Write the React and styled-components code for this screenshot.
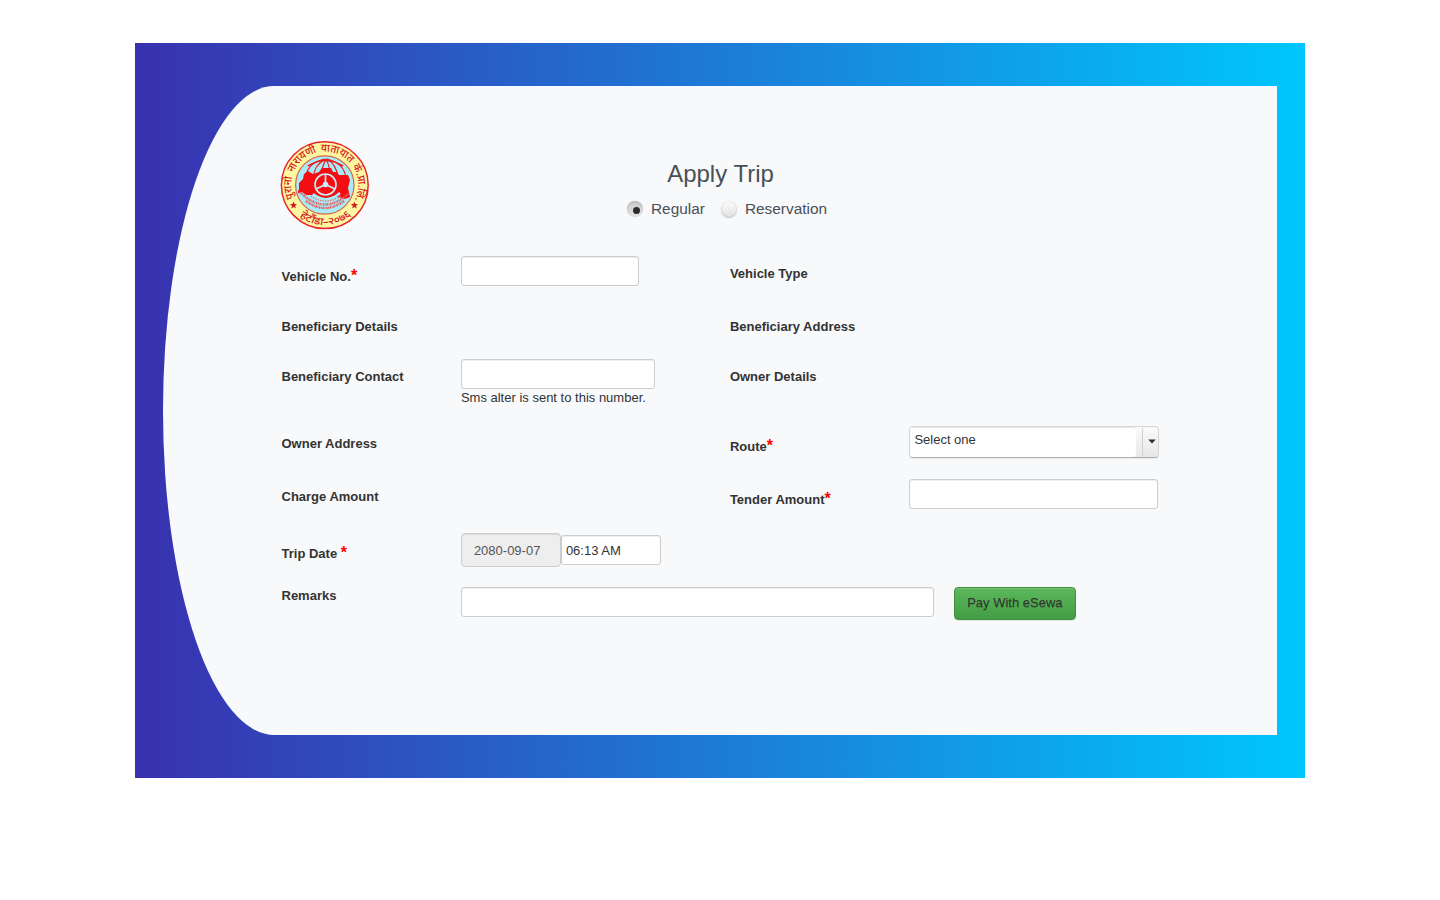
import React from "react";
import styled, { createGlobalStyle, css } from "styled-components";

const GlobalStyle = createGlobalStyle`
  *, *::before, *::after { box-sizing: border-box; }
  body {
    margin: 0;
    background: #fff;
    color: #333;
    font: 13px/20px "Liberation Sans", Arial, sans-serif;
  }
`;

const Page = styled.main`
  width: 1170px;
  height: 735px;
  margin: 43px auto 0;
  padding: 43px 28px 43px 28px;
  background: linear-gradient(to right, #3931af, #00c6ff);
`;

const Card = styled.section`
  height: 649px;
  padding: 55px 110px 0 118.5px;
  background: #f8f9fb;
  border-top-left-radius: 10% 50%;
  border-bottom-left-radius: 10% 50%;
`;

const Header = styled.header`
  display: grid;
  grid-template-columns: 90px 1fr 90px;
  height: 115px;
  margin-left: -2px;
`;

const Emblem = styled.svg`
  display: block;
  width: 90px;
  height: 90px;
`;

const Heading = styled.div`
  display: flex;
  flex-direction: column;
  align-items: center;
  padding: 19px 6.5px 0 0;
  color: #495057;
`;

const Title = styled.h3`
  margin: 0;
  padding-left: 1px;
  font-size: 24px;
  line-height: 28px;
  font-weight: 400;
`;

const Choices = styled.div`
  display: flex;
  gap: 16px;
  margin-top: 11px;
  padding-left: 14px;
`;

const Choice = styled.label`
  display: flex;
  align-items: center;
  gap: 8px;
  font-size: 15.4px;
  line-height: 20px;
`;

const Radio = styled.span`
  display: flex;
  width: 16px;
  height: 16px;
  border-radius: 50%;
  background: ${(p) => (p.$on ? "linear-gradient(#c9c9c9, #e4e4e4)" : "linear-gradient(#fdfdfd, #e2e2e2)")};
  box-shadow: ${(p) =>
    p.$on
      ? "inset 0 1px 2px rgba(0,0,0,.12), 0 0 0 .5px rgba(0,0,0,.08)"
      : "inset 0 0 0 1px rgba(0,0,0,.07), 0 1px 1px rgba(0,0,0,.22)"};

  &::after {
    content: "";
    display: ${(p) => (p.$on ? "block" : "none")};
    width: 7px;
    height: 7px;
    margin: 6px 0 0 6px;
    border-radius: 50%;
    background: #2b2b2b;
  }
`;

const Row = styled.div`
  display: grid;
  grid-template-columns: 179.4px 269px 179.2px 1fr;
  align-items: start;
  height: ${(p) => p.$height}px;
`;

const RemarksRow = styled.div`
  display: grid;
  grid-template-columns: 179.4px 473px auto;
  align-items: start;
  justify-content: start;
`;

const LabelText = styled.label`
  padding-top: ${(p) => (p.$flush ? 1 : p.$required ? 11 : 8)}px;
  font-weight: 700;
  white-space: pre;
`;

const Star = styled.span`
  color: #f00;
  font-size: 16px;
  line-height: 1;
`;

const control = css`
  display: block;
  height: 30px;
  padding: 4px;
  border: 1px solid #ccc;
  border-radius: 3px;
  background: #fff;
  box-shadow: inset 0 1px 1px rgba(0, 0, 0, 0.075);
  color: #333;
  font: inherit;
  outline: none;
`;

const TextInput = styled.input`
  ${control}
  width: ${(p) => p.$width}px;
  margin-top: ${(p) => p.$offset || 0}px;
`;

const DateInput = styled.input`
  ${control}
  width: 100px;
  height: 34px;
  padding: 6px 12px;
  border-radius: 4px;
  background: #eee;
  color: #555;
`;

const DateTime = styled.div`
  display: flex;
`;

const Hint = styled.div`
  line-height: 18px;
`;

const Combo = styled.div`
  display: flex;
  width: 250px;
  height: 32px;
  border: 1px solid #d6d6d6;
  border-bottom-color: #ababab;
  border-radius: 4px;
  background: linear-gradient(#fafafa, #e8e8e8);
  box-shadow: 0 1px 1px rgba(0, 0, 0, 0.06);
  overflow: hidden;
`;

const ComboValue = styled.div`
  width: 226px;
  padding: 3px 4.3px;
  border-radius: 0 3px 3px 0;
  background: #fff;
  box-shadow: inset 0 1px 1px rgba(0, 0, 0, 0.1);
`;

const ComboArrow = styled.div`
  display: flex;
  align-items: center;
  justify-content: center;
  width: 16px;
  margin-left: auto;
  border-left: 1px solid #d0d0d0;
  border-radius: 4px;
  background: linear-gradient(#fbfbfb, #e6e6e6);

  svg { display: block; margin: 0 0 1px 2px; }
`;

const PayButton = styled.button`
  height: 33px;
  width: 122px;
  margin: 2px 0 0 20px;
  padding: 0 0 2px;
  border: 1px solid #3e8f3e;
  border-radius: 4px;
  background: linear-gradient(#5cb85c, #449d44);
  box-shadow: inset 0 1px 0 rgba(255, 255, 255, 0.15), 0 1px 1px rgba(0, 0, 0, 0.075);
  color: #333;
  font: inherit;
  text-shadow: 0 1px 0 rgba(0, 0, 0, 0.2);
`;

const Label = ({ children, required, flush }) => (
  <LabelText $required={required} $flush={flush}>
    {children}
    {required && <Star>*</Star>}
  </LabelText>
);

const Logo = () => (
  <Emblem viewBox="0 0 90 90" role="img">
    <defs>
      <path id="upperArc" d="M 14.4 58 A 33.4 33.4 0 1 1 70.4 65.4" />
      <path id="lowerArc" d="M 13 68.7 A 40.5 40.5 0 0 0 76.6 68.7" />
      <clipPath id="disc"><circle cx="45" cy="44" r="28" /></clipPath>
    </defs>
    <circle cx="44.8" cy="44.2" r="43.4" fill="#fdf6a3" stroke="#e8242a" strokeWidth="1.5" />
    <circle cx="44.8" cy="44" r="29.2" fill="#a8ebf7" stroke="#d9674c" strokeWidth="1.2" />
    <g clipPath="url(#disc)">
      <g fill="none" stroke="#f01318" strokeWidth="1.1">
        <path d="M45 18 C34 20 27 27 25 37" />
        <path d="M46 18 C39 21 34 28 33 37" />
        <path d="M46 18 C44 22 41 28 41 36" />
        <path d="M46 18 C49 23 50 29 50 36" />
        <path d="M47 18 C54 22 57 29 58 36" />
        <path d="M47 18 C60 21 65 29 66 37" />
        <path d="M28 25 Q45 14 63 25" strokeWidth="1.5" />
      </g>
      <path d="M17 53 L19 48 L19 42 L23 38 L24 33 L28 30 L33 33 L39 31 L42 27 L51 27 L53 31 L57 31 L59 34 L68 34 L70 39 L68 47 L70 56 L65 58 L54 55 L45 58 L36 54 L26 54 L22 51 Z" fill="#f40d12" />
      <path d="M33 53 Q46 64 60 52" fill="none" stroke="#a8ebf7" strokeWidth="2.5" />
      <circle cx="45.5" cy="43.5" r="10.5" fill="#f40d12" stroke="#c8eef0" strokeWidth="1.7" />
      <g stroke="#c8eef0" strokeWidth="1.7">
        <path d="M45.5 43.5 L45.5 33 M45.5 43.5 L36 48 M45.5 43.5 L55 48" />
      </g>
      <circle cx="45.5" cy="43.5" r="2.8" fill="#c8eef0" />
      <g fill="none" stroke="#e85b5d" strokeWidth="2.4" strokeDasharray="1.5 .7 .8 .6">
        <path d="M21 52 Q45 75 69 52" />
        <path d="M26 60 Q45 74 64 60" />
      </g>
      <path d="M31 55 Q45 65 61 55" fill="none" stroke="#e87a7c" strokeWidth="1.3" strokeDasharray="1.5 1" />
    </g>
    <g fill="#d4181c" fontFamily='"Noto Sans", "Noto Sans Devanagari", sans-serif' fontWeight="500">
      <text fontSize="11" wordSpacing="1.5">
        <textPath href="#upperArc" startOffset="1" textLength="133" lengthAdjust="spacingAndGlyphs">पुरानो नारायणी यातायात कं.प्रा.लि.</textPath>
      </text>
      <text fontSize="10.5">
        <textPath href="#lowerArc" startOffset="9.5" textLength="56" lengthAdjust="spacingAndGlyphs">हेटौंडा–२०७६</textPath>
      </text>
    </g>
    <g fill="#d01b1e">
      <path d="M13.5 60.5 l1 2.4 2.6.2-2 1.7.7 2.6-2.3-1.4-2.2 1.4.6-2.6-2-1.7 2.6-.2z" />
      <path d="M74.4 60.5 l1 2.4 2.6.2-2 1.7.7 2.6-2.3-1.4-2.2 1.4.6-2.6-2-1.7 2.6-.2z" />
    </g>
  </Emblem>
);

export default function App() {
  return (
    <>
      <GlobalStyle />
      <Page>
        <Card>
          <Header>
            <Logo />
            <Heading>
              <Title>Apply Trip</Title>
              <Choices>
                <Choice><Radio $on />Regular</Choice>
                <Choice><Radio />Reservation</Choice>
              </Choices>
            </Heading>
          </Header>
          <Row $height={53}>
            <Label required>Vehicle No.</Label>
            <TextInput $width={178} />
            <Label>Vehicle Type</Label>
          </Row>
          <Row $height={50}>
            <Label>Beneficiary Details</Label>
            <span />
            <Label>Beneficiary Address</Label>
          </Row>
          <Row $height={67}>
            <Label>Beneficiary Contact</Label>
            <div>
              <TextInput $width={194} />
              <Hint>Sms alter is sent to this number.</Hint>
            </div>
            <Label>Owner Details</Label>
          </Row>
          <Row $height={53}>
            <Label>Owner Address</Label>
            <span />
            <Label required>Route</Label>
            <Combo>
              <ComboValue>Select one</ComboValue>
              <ComboArrow>
                <svg width="8" height="5" viewBox="0 0 8 5">
                  <path d="M.3 .5 H7.7 L4 4.5 Z" fill="#2b2b2b" />
                </svg>
              </ComboArrow>
            </Combo>
          </Row>
          <Row $height={54}>
            <Label>Charge Amount</Label>
            <span />
            <Label required>Tender Amount</Label>
            <TextInput $width={249} />
          </Row>
          <Row $height={52}>
            <Label required>Trip Date </Label>
            <DateTime>
              <DateInput defaultValue="2080-09-07" readOnly />
              <TextInput $width={100} $offset={2} defaultValue="06:13 AM" />
            </DateTime>
          </Row>
          <RemarksRow>
            <Label flush>Remarks</Label>
            <TextInput $width={473} $offset={2} />
            <PayButton type="button">Pay With eSewa</PayButton>
          </RemarksRow>
        </Card>
      </Page>
    </>
  );
}
